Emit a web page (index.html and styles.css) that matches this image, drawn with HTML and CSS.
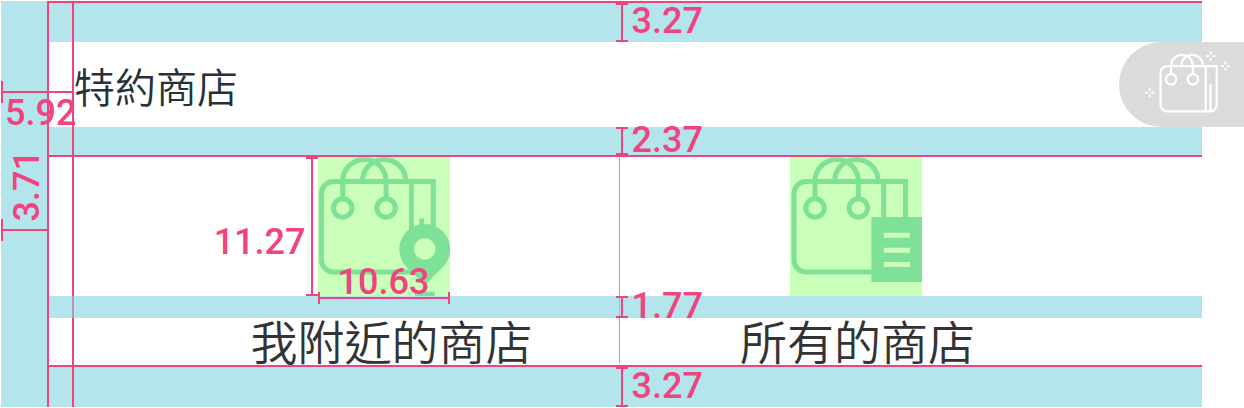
FILE: index.html
```html
<!DOCTYPE html>
<html lang="zh-Hant">
<head>
<meta charset="utf-8">
<title>特約商店</title>
<link rel="stylesheet" href="styles.css">
</head>
<body>
<div class="spec">
  <aside class="rail">
    <div class="rail-measure rail-measure--wide"><span class="value">5.92</span></div>
    <div class="rail-measure rail-measure--narrow"><span class="value value--turned">3.71</span></div>
  </aside>
  <main class="content">
    <div class="guide"></div>
    <div class="divider"></div>

    <div class="band band--top">
      <div class="measure"><i class="bracket"></i><span class="value">3.27</span></div>
    </div>

    <header class="header">
      <h1 class="title">特約商店</h1>
      <button class="pill" type="button" aria-label="特約商店">
        <svg class="pill-icon" viewBox="0 0 125 86" fill="none" stroke="#fff" stroke-width="2.3">
          <path d="M99 24.3H48a6.7 6.7 0 0 0-6.7 6.7v32.500a6.700 6.700 0 0 0 6.700 6.700h43.500a6.700 6.700 0 0 0 6.700-6.700V24.300M87 24.300V70M91.700 43v27"/>
          <path d="M52 32.500V24a11 11 0 0 1 22 0v8.500M62.300 24a11 11 0 0 1 22 0"/>
          <circle cx="52" cy="37.700" r="5.200"/><circle cx="74" cy="37.700" r="5.200"/>
          <g stroke-width="1.800">
            <path d="M92 9.500v3.200M92 16v3.200M87.200 14.300h3.200M93.700 14.300h3.200"/>
            <path d="M107 19.500v3.200M107 26v3.200M102.200 24.300h3.200M108.700 24.300h3.200"/>
            <path d="M30.300 46.500v3.200M30.300 53v3.200M25.500 51.300h3.200M32 51.300h3.200"/>
          </g>
        </svg>
      </button>
    </header>

    <div class="band band--middle">
      <div class="measure"><i class="bracket"></i><span class="value">2.37</span></div>
    </div>

    <section class="icons">
      <div class="tile">
        <svg class="tile-icon" viewBox="0 0 132 139" fill="none" stroke="#7ee197" stroke-width="5">
          <path d="M94 115H15.500a12 12 0 0 1-12-12V36.500a12 12 0 0 1 12-12h99.800V80M93.400 24.500V80"/>
          <path d="M24.700 42V24.200a21.700 21.700 0 0 1 43.400 0V42M44.400 24.200a21.700 21.700 0 0 1 43.400 0"/>
          <circle cx="24.700" cy="51" r="9.200"/><circle cx="68.100" cy="51" r="9.200"/>
          <g fill="#7ee197" stroke="none">
            <path fill-rule="evenodd" d="M101.300 61.500h4.800V67h.600a25.300 25.300 0 0 1 18 43.200L106.700 128 88.700 110.200a25.300 25.300 0 0 1 12.600-42.600zM106.700 81.300a10.700 10.700 0 1 0 0 21.400 10.700 10.700 0 0 0 0-21.400z"/>
            <path d="M97 134.700h19.700v4.300H97z"/>
          </g>
        </svg>
        <div class="height-measure"><span class="value">11.27</span><i class="bracket"></i></div>
        <div class="width-measure"><span class="value">10.63</span><i class="bracket bracket--flat"></i></div>
      </div>
      <div class="tile">
        <svg class="tile-icon" viewBox="0 0 132 139" fill="none" stroke="#7ee197" stroke-width="5">
          <path d="M84 115H16a12 12 0 0 1-12-12V36.500a12 12 0 0 1 12-12h99.500V62M93.700 24.500V62"/>
          <path d="M25 42V24.200a21.700 21.700 0 0 1 43.400 0V42M44.700 24.200a21.700 21.700 0 0 1 43.400 0"/>
          <circle cx="25" cy="51" r="9.200"/><circle cx="68.400" cy="51" r="9.200"/>
          <path fill="#7ee197" stroke="none" d="M81.400 60H132v65H81.400z"/>
          <path stroke="#c9ffb8" d="M93.700 78.200h26.300M93.700 93.200h26.300M93.700 107.500h26.300"/>
        </svg>
      </div>
    </section>

    <div class="band band--small">
      <div class="measure"><i class="bracket"></i><span class="value">1.77</span></div>
    </div>

    <section class="labels">
      <p class="label">我附近的商店</p>
      <p class="label">所有的商店</p>
    </section>

    <div class="band band--bottom">
      <div class="measure"><i class="bracket"></i><span class="value">3.27</span></div>
    </div>
  </main>
</div>
</body>
</html>
```
FILE: styles.css
```css
:root {
  --pink: #f0437f;
  --blue: #b5e5ec;
  --green: #c9ffb8;
  --edge: 42px;
}

* { box-sizing: border-box; }

body {
  margin: 0;
  background: #fff;
  color: #333;
  font-family: "Noto Sans CJK TC", sans-serif;
}

.spec {
  display: flex;
  padding: 1px 0 1px 1px;
}

/* Left margin with its two distances */
.rail {
  position: relative;
  z-index: 3;
  flex: 0 0 48px;
  display: flex;
  flex-direction: column;
  background: var(--blue);
  border-right: 2px solid var(--pink);
}

.rail-measure {
  position: absolute;
  left: 0;
  height: 22px;
  border-left: 2px solid var(--pink);
  background: linear-gradient(var(--pink), var(--pink)) center / 100% 2px no-repeat;
}

.rail-measure--wide { top: 80px; width: 72px; }
.rail-measure--narrow { top: 218px; width: 46px; }

.rail-measure .value {
  position: absolute;
  left: 2px;
  top: 14px;
}

.rail-measure .value--turned {
  left: 6px;
  top: auto;
  bottom: 20px;
  writing-mode: vertical-rl;
  transform: rotate(180deg);
}

.value {
  color: var(--pink);
  font: 500 36px/36px Roboto, sans-serif;
}

.content {
  position: relative;
  flex: 1;
  min-width: 0;
}

.guide {
  position: absolute;
  z-index: 1;
  left: 23px;
  top: 0;
  bottom: 0;
  width: 2px;
  background: var(--pink);
}

.divider {
  position: absolute;
  left: calc(50% - 28px);
  top: 156px;
  bottom: 44px;
  width: 1px;
  background: #aaa;
}

/* Spacing bands */
.band {
  position: relative;
  margin-right: var(--edge);
  padding-left: calc(50% - 31px);
  background: var(--blue);
}

.band--top { height: 41px; border-top: 2px solid var(--pink); }
.band--middle { height: 30px; border-bottom: 2px solid var(--pink); }
.band--small { z-index: 2; height: 22px; background: rgba(132, 212, 223, 0.6); }
.band--bottom { height: 42px; border-top: 2px solid var(--pink); }

.measure {
  display: flex;
  align-items: center;
  gap: 4px;
  height: 100%;
}

.measure .value { padding-bottom: 3px; }

.bracket {
  align-self: stretch;
  flex: 0 0 12px;
  border: solid var(--pink);
  border-width: 2px 0;
  background: linear-gradient(var(--pink), var(--pink)) center / 2px 100% no-repeat;
}

.bracket--flat {
  flex-basis: 12px;
  border-width: 0 2px;
  background-size: 100% 2px;
}

/* Title row */
.header {
  position: relative;
  z-index: 2;
  display: flex;
  align-items: center;
  justify-content: space-between;
  padding-left: 25px;
}

.title {
  margin: 0;
  color: #263238;
  font-size: 41px;
  font-weight: 350;
  line-height: 60px;
}

.pill {
  display: block;
  padding: 0;
  border: 0;
  border-radius: 43px 0 0 43px;
  background: #dbdbdb;
}

.pill-icon {
  display: block;
  width: 125px;
  height: 85px;
}

/* Two choices */
.icons,
.labels {
  display: grid;
  justify-content: center;
  justify-items: center;
}

.icons {
  grid-template-columns: repeat(2, 472px);
  padding-right: 54px;
}

.labels {
  grid-template-columns: repeat(2, 466px);
  padding: 0 44px 4px 0;
}

.tile {
  position: relative;
  z-index: 3;
  background: var(--green);
}

.tile-icon {
  display: block;
  width: 132px;
  height: 139px;
}

.height-measure {
  position: absolute;
  right: 100%;
  top: 0;
  bottom: 0;
  display: flex;
  align-items: center;
}

.height-measure .value { padding-top: 30px; }

.width-measure {
  position: absolute;
  left: 0;
  right: 0;
  bottom: -8px;
  display: flex;
  flex-direction: column;
  align-items: center;
}

.width-measure .value { margin-bottom: -8px; }

.bracket--flat { width: 100%; }

.label {
  margin: 0;
  font-size: 47px;
  font-weight: 350;
  line-height: 43px;
}
```
